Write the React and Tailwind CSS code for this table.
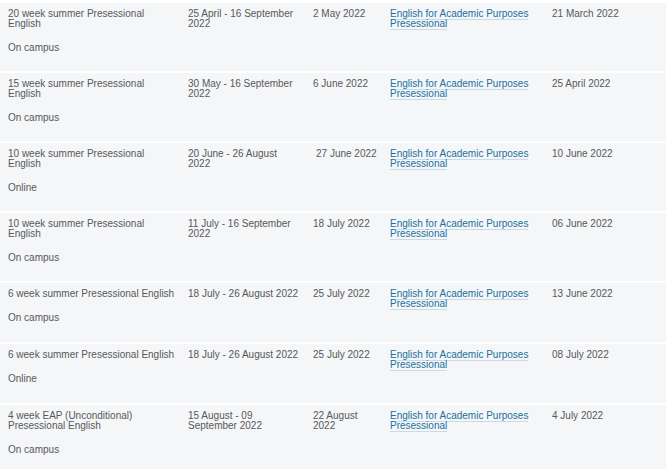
import React from "react";

const rows = [
  { title: "20 week summer Presessional English", mode: "On campus", dates: "25 April - 16 September 2022", start: "2 May 2022", deadline: "21 March 2022" },
  { title: "15 week summer Presessional English", mode: "On campus", dates: "30 May - 16 September 2022", start: "6 June 2022", deadline: "25 April 2022" },
  { title: "10 week summer Presessional English", mode: "Online", dates: "20 June - 26 August 2022", start: "27 June 2022", deadline: "10 June 2022", indent: true },
  { title: "10 week summer Presessional English", mode: "On campus", dates: "11 July - 16 September 2022", start: "18 July 2022", deadline: "06 June 2022" },
  { title: "6 week summer Presessional English", mode: "On campus", dates: "18 July - 26 August 2022", start: "25 July 2022", deadline: "13 June 2022" },
  { title: "6 week summer Presessional English", mode: "Online", dates: "18 July - 26 August 2022", start: "25 July 2022", deadline: "08 July 2022" },
  { title: "4 week EAP (Unconditional) Presessional English", mode: "On campus", dates: "15 August - 09 September 2022", start: "22 August 2022", deadline: "4 July 2022" },
];

export default function App() {
  return (
    <div
      className="w-[666px] min-h-[469px] bg-white pt-[3px] flex flex-col gap-[2px] text-[10px] leading-[10px] text-[#585858]"
      style={{ fontFamily: '"Liberation Sans", Arial, sans-serif' }}
    >
      {rows.map((r, i) => (
        <div
          key={i}
          className="shrink-0 grid grid-cols-[180px_125px_77px_162px_1fr] bg-[#f4f6f8] pt-[6px] pb-[18px] min-h-[59px]"
        >
          <div className="pl-2">
            <div className="w-[168px]">{r.title}</div>
            <div className="mt-[14px]">{r.mode}</div>
          </div>
          <div className="pl-2">
            <div className="w-[112px]">{r.dates}</div>
          </div>
          <div className="pl-2">
            <div className={r.indent ? "w-[70px] pl-[3px]" : "w-[67px]"}>{r.start}</div>
          </div>
          <div className="pl-2">
            <div className="w-[150px]">
              <a
                href="#"
                className="text-[#21709f] no-underline border-b border-[#c8dbe9]"
              >
                English for Academic Purposes Presessional
              </a>
            </div>
          </div>
          <div className="pl-2">{r.deadline}</div>
        </div>
      ))}
    </div>
  );
}
